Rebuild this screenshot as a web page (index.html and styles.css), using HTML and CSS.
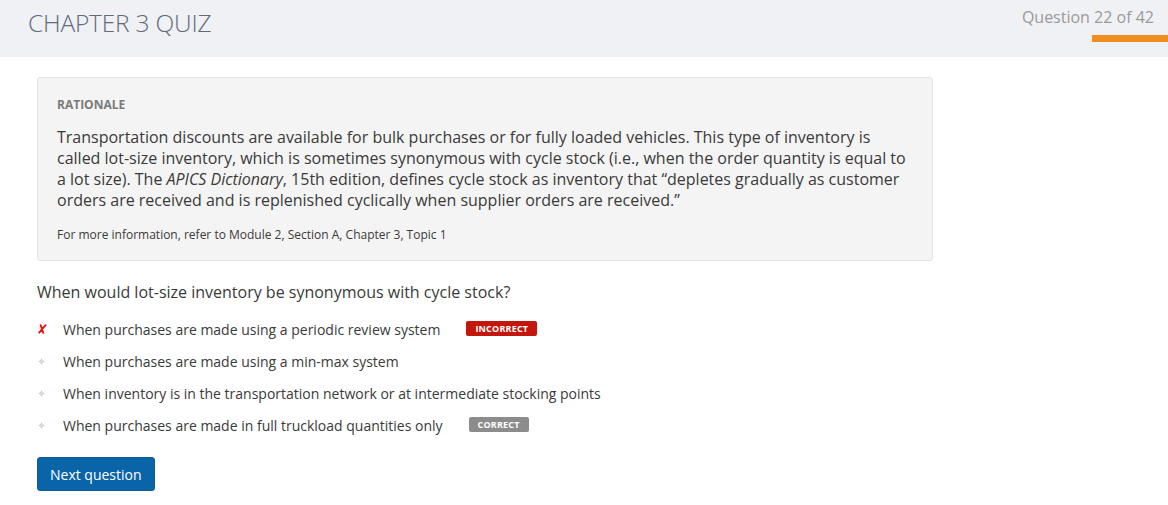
FILE: index.html
```html
<!DOCTYPE html>
<html>
<head>
<meta charset="utf-8">
<link rel="stylesheet" href="styles.css">
</head>
<body>
<header class="top">
  <h1 class="title">CHAPTER 3 QUIZ</h1>
  <div class="progress">
    <div class="count">Question 22 of 42</div>
    <div class="bar"></div>
  </div>
</header>
<main class="content">
  <section class="rationale">
    <div class="label">RATIONALE</div>
    <p class="body">Transportation discounts are available for bulk purchases or for fully loaded vehicles. This type of inventory is called lot-size inventory, which is sometimes synonymous with cycle stock (i.e., when the order quantity is equal to a lot size). The <em>APICS Dictionary</em>, 15th edition, defines cycle stock as inventory that “depletes gradually as customer orders are received and is replenished cyclically when supplier orders are received.”</p>
    <p class="ref">For more information, refer to Module 2, Section A, Chapter 3, Topic 1</p>
  </section>
  <p class="question">When would lot-size inventory be synonymous with cycle stock?</p>
  <ul class="options">
    <li class="option">
      <span class="icon"><svg width="9" height="10" viewBox="0 0 9 10"><path d="M2.6 1.2 Q4 4.5 5.2 8.8 M7.6 1.2 Q4 5 1.2 8.6" stroke="#e8120c" stroke-width="1.9" stroke-linecap="round" fill="none"/></svg></span>
      <span class="text">When purchases are made using a periodic review system</span>
      <span class="badge badge-wrong">INCORRECT</span>
    </li>
    <li class="option">
      <span class="icon"><svg width="7" height="7" viewBox="0 0 7 7"><path d="M3.5 0.3 L4.6 2.4 L6.7 3.5 L4.6 4.6 L3.5 6.7 L2.4 4.6 L0.3 3.5 L2.4 2.4 Z" fill="#c4c4c4"/><circle cx="3.5" cy="3.5" r="0.9" fill="#f0f0f0"/></svg></span>
      <span class="text">When purchases are made using a min-max system</span>
    </li>
    <li class="option">
      <span class="icon"><svg width="7" height="7" viewBox="0 0 7 7"><path d="M3.5 0.3 L4.6 2.4 L6.7 3.5 L4.6 4.6 L3.5 6.7 L2.4 4.6 L0.3 3.5 L2.4 2.4 Z" fill="#c4c4c4"/><circle cx="3.5" cy="3.5" r="0.9" fill="#f0f0f0"/></svg></span>
      <span class="text">When inventory is in the transportation network or at intermediate stocking points</span>
    </li>
    <li class="option">
      <span class="icon"><svg width="7" height="7" viewBox="0 0 7 7"><path d="M3.5 0.3 L4.6 2.4 L6.7 3.5 L4.6 4.6 L3.5 6.7 L2.4 4.6 L0.3 3.5 L2.4 2.4 Z" fill="#c4c4c4"/><circle cx="3.5" cy="3.5" r="0.9" fill="#f0f0f0"/></svg></span>
      <span class="text">When purchases are made in full truckload quantities only</span>
      <span class="badge badge-right">CORRECT</span>
    </li>
  </ul>
  <button class="next">Next question</button>
</main>
</body>
</html>
```

FILE: styles.css
```css
* { box-sizing: border-box; }
html, body { margin: 0; padding: 0; background: #fff; }
body { font-family: "Open Sans", "Liberation Sans", sans-serif; color: #3a3a3a; }

.top {
  height: 57px;
  background: #eff1f5;
  display: flex;
  justify-content: space-between;
  align-items: flex-start;
}
.title {
  margin: 0;
  padding: 6px 0 0 28px;
  font-weight: 300;
  font-size: 24.5px;
  line-height: 34px;
  color: #5f6b78;
  letter-spacing: -0.2px;
}
.progress {
  display: flex;
  flex-direction: column;
  align-items: flex-end;
  padding-top: 6px;
}
.count {
  font-size: 16px;
  line-height: 22px;
  color: #9a9a9a;
  padding-right: 14px;
}
.bar {
  margin-top: 7px;
  width: 76px;
  height: 7px;
  background: #f08d1f;
}

.content { padding: 20px 0 0 37px; }

.rationale {
  width: 896px;
  background: #f4f4f4;
  border: 1px solid #e2e2e2;
  border-radius: 3px;
  padding: 18px 20px 17px 19px;
}
.label {
  font-size: 12px;
  line-height: 17px;
  font-weight: 700;
  color: #7a7a7a;
}
.body {
  margin: 14px 0 0;
  font-size: 16px;
  line-height: 21px;
  color: #3a3a3a;
}
.ref {
  margin: 15px 0 0;
  font-size: 12px;
  line-height: 17px;
  color: #3a3a3a;
}

.question {
  margin: 20px 0 0;
  font-size: 16px;
  line-height: 22px;
  color: #3a3a3a;
}
.options {
  list-style: none;
  margin: 10px 0 0;
  padding: 0;
}
.option {
  display: flex;
  align-items: center;
  height: 32px;
  font-size: 14px;
  color: #3a3a3a;
}
.icon {
  width: 26px;
  display: flex;
  align-items: center;
  padding-left: 1px;
}
.badge {
  margin-left: 26px;
  margin-top: -2px;
  font-size: 9px;
  font-weight: 700;
  letter-spacing: 0.2px;
  color: #fff;
  border-radius: 2px;
  line-height: 15px;
  padding: 0 9px;
}
.badge-wrong { background: #c4170c; }
.badge-right { background: #8c8c8c; }

.next {
  margin-top: 16px;
  height: 34px;
  padding: 0 12px;
  background: #0a64a8;
  color: #fff;
  border: 1px solid #0a5a96;
  border-radius: 3px;
  font-family: "Open Sans", "Liberation Sans", sans-serif;
  font-size: 14px;
  font-weight: 500;
}
```
